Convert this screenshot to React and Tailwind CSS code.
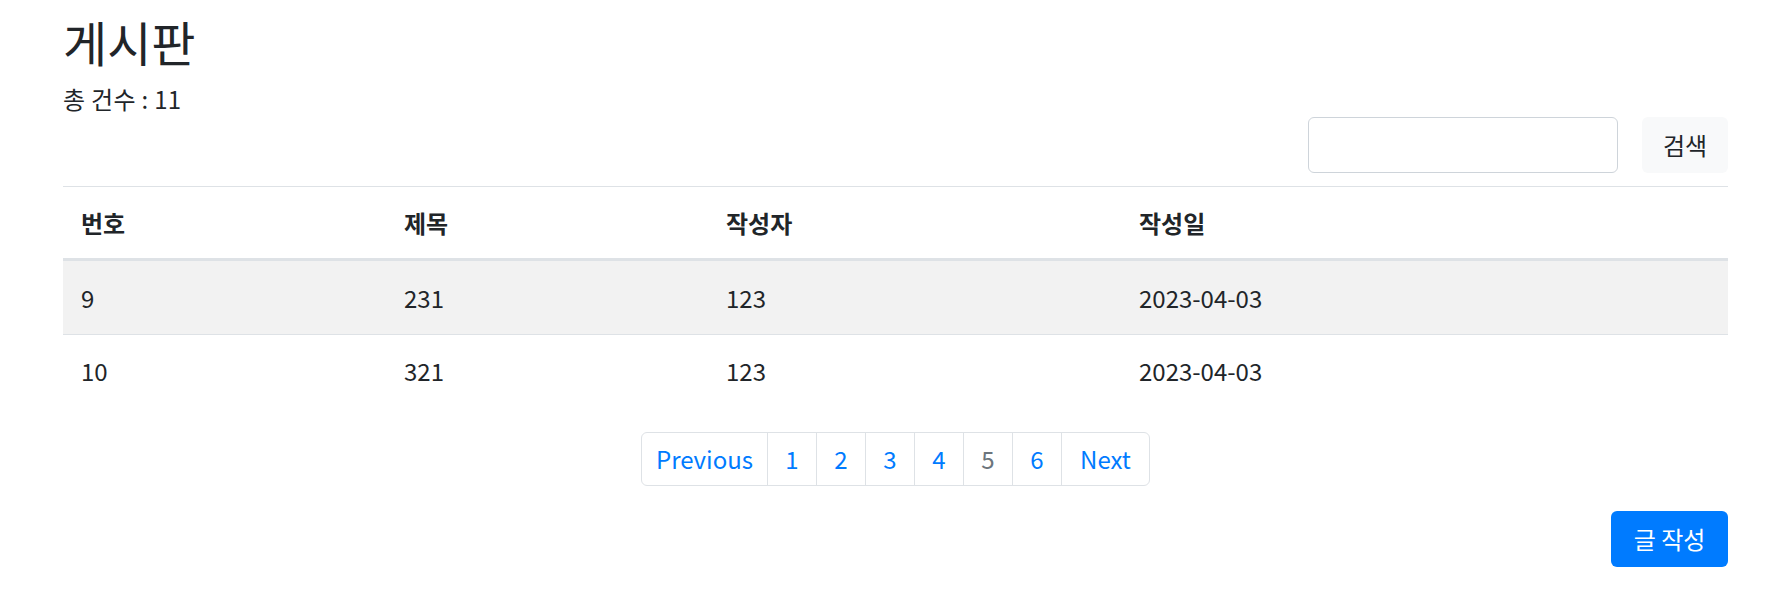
const posts = [
  { id: 9, title: '231', writer: '123', date: '2023-04-03' },
  { id: 10, title: '321', writer: '123', date: '2023-04-03' },
];

const pages = ['1', '2', '3', '4', '5', '6'];

export default function App() {
  return (
    <div className="min-h-[594px] bg-white text-[#212529] font-['Noto_Sans_CJK_KR','Noto_Sans',sans-serif]">
      <div className="ml-[63px] w-[1665px]">
        <h2 className="mt-[12px] h-[58px] text-[48px] leading-[58px] font-normal">게시판</h2>
        <p className="mt-[11px] h-[36px] text-[24px] leading-[36px] tracking-[0.3px]">총 건수 : 11</p>

        {/* Search */}
        <div className="flex justify-end gap-[24px] h-[56px]">
          <input
            type="text"
            className="w-[310px] h-[56px] border border-[#ced4da] rounded-[6px] px-[18px] text-[24px] focus:outline-none"
          />
          <button className="w-[86px] h-[56px] bg-[#f8f9fa] rounded-[6px] text-[24px] text-[#212529]">검색</button>
        </div>

        {/* Table */}
        <div className="mt-[13px] border-t border-[#dee2e6] text-[24px]">
          <div className="grid grid-cols-[323px_322px_413px_1fr] h-[74px] items-center border-b-[3px] border-[#dee2e6] font-bold">
            <div className="px-[18px]">번호</div>
            <div className="px-[18px]">제목</div>
            <div className="px-[18px]">작성자</div>
            <div className="px-[18px]">작성일</div>
          </div>
          {posts.map((p, i) => (
            <div
              key={p.id}
              className={
                i === 0
                  ? 'grid grid-cols-[323px_322px_413px_1fr] h-[74px] items-center bg-[#f2f2f2] border-b border-[#dee2e6]'
                  : 'grid grid-cols-[323px_322px_413px_1fr] h-[72px] items-center'
              }
            >
              <div className="px-[18px]">{p.id}</div>
              <div className="px-[18px]">{p.title}</div>
              <div className="px-[18px]">{p.writer}</div>
              <div className="px-[18px]">{p.date}</div>
            </div>
          ))}
        </div>

        {/* Pagination */}
        <div className="mt-[25px] flex justify-center">
          <ul className="flex h-[54px] border border-[#dee2e6] rounded-[6px] text-[24px] text-[#007bff]">
            <li className="w-[126px] flex items-center justify-center border-r border-[#dee2e6]">Previous</li>
            {pages.map((n) => (
              <li
                key={n}
                className={
                  n === '5'
                    ? 'w-[49px] flex items-center justify-center border-r border-[#dee2e6] text-[#6c757d]'
                    : 'w-[49px] flex items-center justify-center border-r border-[#dee2e6]'
                }
              >
                {n}
              </li>
            ))}
            <li className="w-[87px] flex items-center justify-center">Next</li>
          </ul>
        </div>

        <div className="mt-[25px] flex justify-end">
          <button className="w-[117px] h-[56px] bg-[#007bff] rounded-[6px] text-white text-[24px]">글 작성</button>
        </div>
      </div>
    </div>
  );
}
